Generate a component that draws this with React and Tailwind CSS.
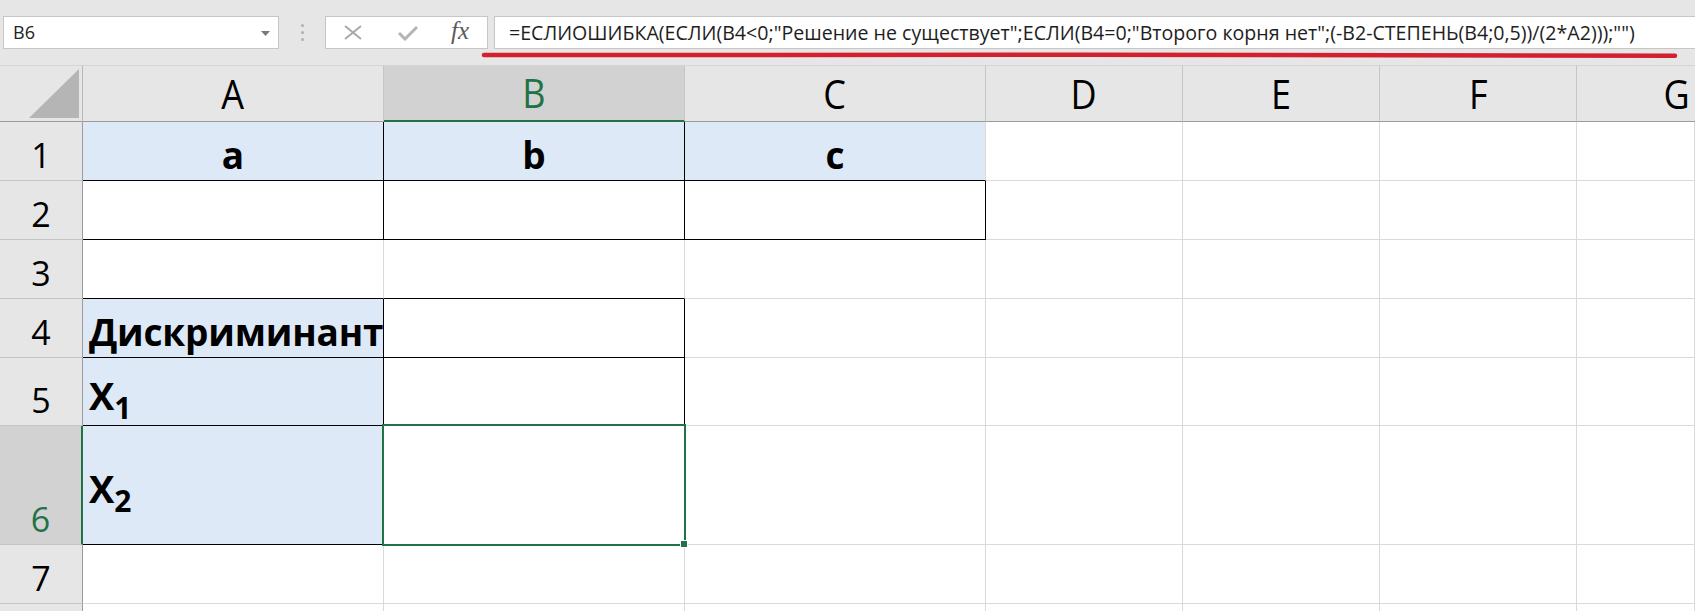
import React from "react";

const FORMULA =
  '=ЕСЛИОШИБКА(ЕСЛИ(B4<0;"Решение не существует";ЕСЛИ(B4=0;"Второго корня нет";(-B2-СТЕПЕНЬ(B4;0,5))/(2*A2)));"")';

const DEF = "border-r border-b border-r-[#dadada] border-b-[#dadada] bg-white";
const RB = "border-r border-b border-r-black border-b-black";
const BB = "border-r border-b border-r-[#dadada] border-b-black";
const BLUE = "bg-[#dde9f6]";

function Toolbar() {
  return (
    <div className="h-[65px] flex items-start pt-[16px] bg-[#e6e6e6]">
      <div className="ml-[3px] w-[276px] h-[33px] border border-[#c6c6c6] bg-white flex items-center pl-[9px] pr-[8px] text-[18px] text-[#222] font-['Open_Sans',sans-serif]">
        <span className="flex-1">B6</span>
        <svg width="9" height="5" viewBox="0 0 9 5" className="mt-[1px]">
          <path d="M0 0 L9 0 L4.5 5 Z" fill="#7a7a7a" />
        </svg>
      </div>
      <div className="w-[46px] h-[33px] flex flex-col items-center justify-center gap-[4px]">
        <div className="w-[3px] h-[3px] rounded-full bg-[#b0b0b0]" />
        <div className="w-[3px] h-[3px] rounded-full bg-[#b0b0b0]" />
        <div className="w-[3px] h-[3px] rounded-full bg-[#b0b0b0]" />
      </div>
      <div className="w-[163px] h-[33px] border border-[#c6c6c6] bg-white flex items-center">
        <svg width="20" height="15" viewBox="0 0 20 15" className="ml-[17px]">
          <path d="M2 1 L18 14 M18 1 L2 14" stroke="#a8a8a8" strokeWidth="2" fill="none" />
        </svg>
        <svg width="20" height="16" viewBox="0 0 20 16" className="ml-[35px]">
          <path d="M1 8 L7 14 L19 2" stroke="#b4b4b4" strokeWidth="3" fill="none" />
        </svg>
        <span className="ml-[33px] text-[25px] italic text-[#5a5a5a] font-['Liberation_Serif',serif] leading-none -mt-[4px]">
          fx
        </span>
      </div>
      <div className="ml-[6px] flex-1 h-[33px] border border-r-0 border-[#c6c6c6] bg-white flex items-center pl-[14px] pt-[1px] text-[19.6px] text-[#1e1e1e] whitespace-nowrap font-['Open_Sans',sans-serif]">
        {FORMULA}
      </div>
    </div>
  );
}

function ColHead({ label, selected, last }) {
  const base =
    "flex items-center justify-center leading-none text-[40px] font-['Open_Sans',sans-serif] border-t border-t-[#d6d6d6] ";
  const cls = selected
    ? "bg-[#d2d2d2] text-[#217346] border-r border-r-[#c6c6c6] border-b-2 border-b-[#217346]"
    : last
    ? "bg-[#e6e6e6] text-black border-b border-b-[#9b9b9b] justify-end pr-[4px]"
    : "bg-[#e6e6e6] text-black border-r border-r-[#c6c6c6] border-b border-b-[#9b9b9b]";
  return (
    <div className={base + cls}>
      <span className="inline-block scale-x-[0.9]">{label}</span>
    </div>
  );
}

function RowHead({ n, selected }) {
  const base =
    "flex items-end justify-center pb-[8px] leading-none text-[34px] font-['Open_Sans',sans-serif] border-b border-b-[#c4c4c4] ";
  const cls = selected
    ? "bg-[#d2d2d2] text-[#217346] border-r-2 border-r-[#217346]"
    : "bg-[#e6e6e6] text-black border-r border-r-[#9b9b9b]";
  return <div className={base + cls}>{n}</div>;
}

function Cell({ cls, children, center, selected }) {
  return (
    <div
      className={
        "relative flex items-center leading-none pt-[6px] font-bold text-[37px] text-black font-['Open_Sans',sans-serif] whitespace-nowrap " +
        (center ? "justify-center " : "pl-[6px] ") +
        (selected ? "z-10 " : "") +
        cls
      }
    >
      {children}
      {selected && (
        <>
          <div className="absolute -left-[2px] -top-[2px] -right-[2px] -bottom-[2px] border-2 border-[#217346] pointer-events-none" />
          <div className="absolute -right-[4px] -bottom-[4px] w-[8px] h-[8px] bg-[#217346] border border-white" />
        </>
      )}
    </div>
  );
}

function Sub({ d }) {
  return (
    <span className="text-[38px]">
      X
      <span className="relative top-[9px] text-[30px]">{d}</span>
    </span>
  );
}

export default function App() {
  const blank = (k) => <Cell key={k} cls={DEF} />;
  const rest = (r) => ["D", "E", "F", "G"].map((c) => blank(r + c));
  return (
    <div className="relative w-[1695px] h-[611px] overflow-hidden bg-[#e6e6e6]">
      <Toolbar />
      <div className="grid grid-cols-[83px_301px_301px_301px_197px_197px_197px_1fr] grid-rows-[57px_59px_59px_59px_59px_68px_119px_59px_59px] bg-white">
        {/* header */}
        <div className="relative bg-[#e6e6e6] border-r border-b border-r-[#b8b8b8] border-b-[#9b9b9b] border-t border-t-[#d6d6d6]">
          <svg width="50" height="49" viewBox="0 0 50 49" className="absolute right-[3px] bottom-[3px]">
            <path d="M50 0 L50 49 L0 49 Z" fill="#b5b5b5" />
          </svg>
        </div>
        <ColHead label="A" />
        <ColHead label="B" selected />
        <ColHead label="C" />
        <ColHead label="D" />
        <ColHead label="E" />
        <ColHead label="F" />
        <ColHead label="G" last />

        {/* row 1 */}
        <RowHead n="1" />
        <Cell center cls={RB + " " + BLUE}>a</Cell>
        <Cell center cls={RB + " " + BLUE}>b</Cell>
        <Cell center cls={"border-r border-b border-r-[#dadada] border-b-black " + BLUE}>c</Cell>
        {rest("1")}

        {/* row 2 */}
        <RowHead n="2" />
        <Cell cls={RB} />
        <Cell cls={RB} />
        <Cell cls={RB} />
        {rest("2")}

        {/* row 3 */}
        <RowHead n="3" />
        <Cell cls={BB} />
        <Cell cls={BB} />
        <Cell cls={DEF} />
        {rest("3")}

        {/* row 4 */}
        <RowHead n="4" />
        <Cell cls={RB + " " + BLUE}>
          <span className="tracking-[-0.2px]">Дискриминант</span>
        </Cell>
        <Cell cls={RB} />
        <Cell cls={DEF} />
        {rest("4")}

        {/* row 5 */}
        <RowHead n="5" />
        <Cell cls={RB + " " + BLUE}>
          <Sub d="1" />
        </Cell>
        <Cell cls={RB} />
        <Cell cls={DEF} />
        {rest("5")}

        {/* row 6 */}
        <RowHead n="6" selected />
        <Cell cls={RB + " " + BLUE}>
          <Sub d="2" />
        </Cell>
        <Cell cls={RB + " bg-white"} selected />
        <Cell cls={DEF} />
        {rest("6")}

        {/* row 7 */}
        <RowHead n="7" />
        <Cell cls={DEF} />
        <Cell cls={DEF} />
        <Cell cls={DEF} />
        {rest("7")}

        {/* row 8 (only its top edge is visible) */}
        <RowHead n="" />
        <Cell cls={DEF} />
        <Cell cls={DEF} />
        <Cell cls={DEF} />
        {rest("8")}
      </div>
      <svg
        className="absolute left-0 top-0 pointer-events-none"
        width="1695"
        height="70"
        viewBox="0 0 1695 70"
      >
        <path
          d="M484 55 L1079 54.8 L1675 55.8"
          stroke="#d3202f"
          strokeWidth="4.5"
          strokeLinecap="round"
          fill="none"
        />
      </svg>
    </div>
  );
}
